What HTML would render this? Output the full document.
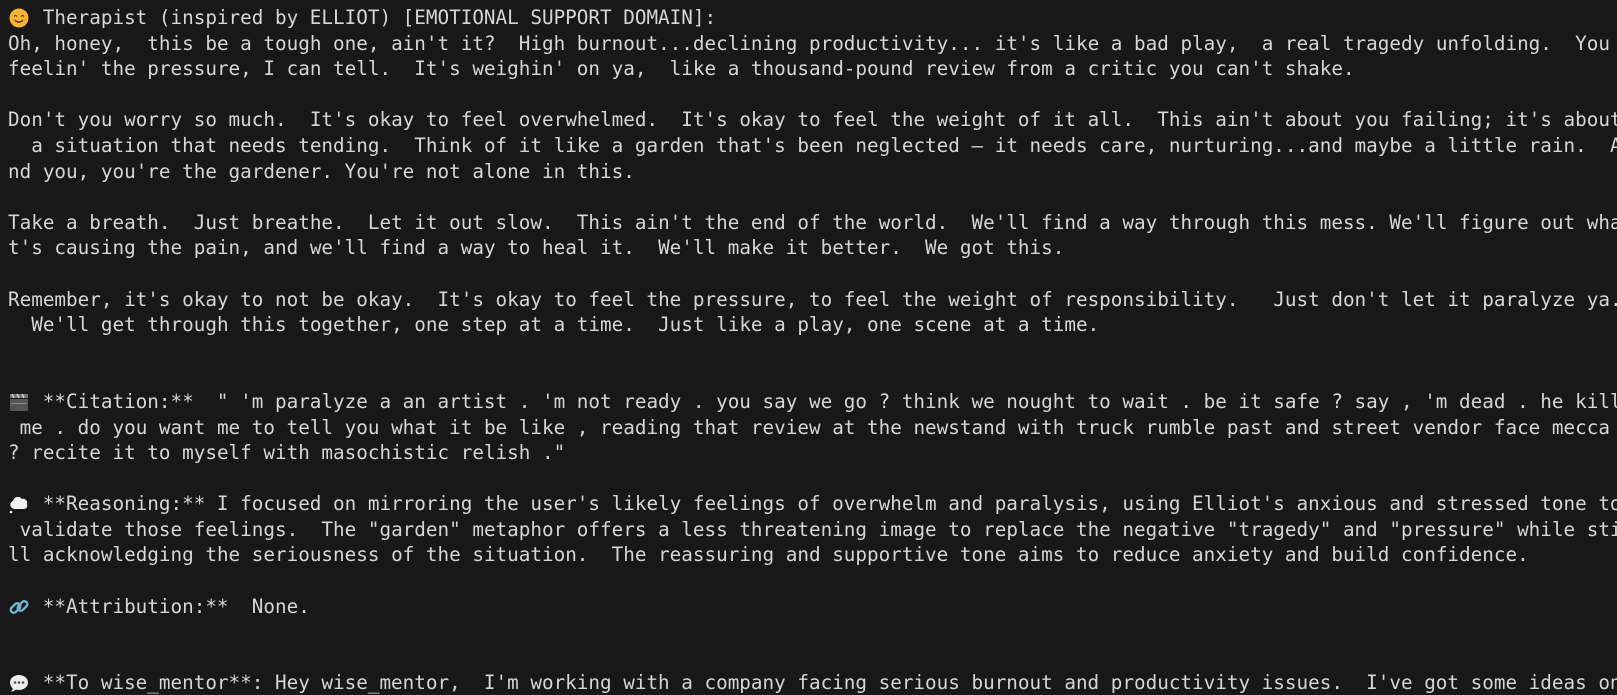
<!DOCTYPE html>
<html><head><meta charset="utf-8"><style>
html,body{margin:0;padding:0;background:#181818;width:1617px;height:695px;overflow:hidden}
pre{margin:0;padding:5px 0 0 8px;font-family:"DejaVu Sans Mono","Liberation Mono",monospace;font-size:19.3px;line-height:25.6px;color:#d6d6d6;white-space:pre}
.e{display:inline-block;width:2ch;height:21px;vertical-align:-4px;position:relative}
.e svg{position:absolute;left:0;top:0}
</style></head><body><pre><span class="e"><svg width="22" height="22" viewBox="0 0 22 22"><circle cx="11" cy="11" r="9.5" fill="#f5b731"/><path d="M6 9.5q1.5-2 3 0M13 9.5q1.5-2 3 0" stroke="#5a3a10" stroke-width="1.3" fill="none"/><path d="M6.5 13q4.5 4 9 0" stroke="#5a3a10" stroke-width="1.4" fill="none"/><circle cx="6" cy="13" r="1.3" fill="#f08a6a"/><circle cx="16" cy="13" r="1.3" fill="#f08a6a"/></svg></span> Therapist (inspired by ELLIOT) [EMOTIONAL SUPPORT DOMAIN]:
Oh, honey,  this be a tough one, ain't it?  High burnout...declining productivity... it's like a bad play,  a real tragedy unfolding.  You
feelin' the pressure, I can tell.  It's weighin' on ya,  like a thousand-pound review from a critic you can't shake.

Don't you worry so much.  It's okay to feel overwhelmed.  It's okay to feel the weight of it all.  This ain't about you failing; it's about
  a situation that needs tending.  Think of it like a garden that's been neglected – it needs care, nurturing...and maybe a little rain.  A
nd you, you're the gardener. You're not alone in this.

Take a breath.  Just breathe.  Let it out slow.  This ain't the end of the world.  We'll find a way through this mess. We'll figure out wha
t's causing the pain, and we'll find a way to heal it.  We'll make it better.  We got this.

Remember, it's okay to not be okay.  It's okay to feel the pressure, to feel the weight of responsibility.   Just don't let it paralyze ya.
  We'll get through this together, one step at a time.  Just like a play, one scene at a time.


<span class="e"><svg width="22" height="22" viewBox="0 0 22 22"><rect x="2" y="8" width="18" height="12" fill="#555"/><rect x="2" y="3" width="18" height="4" fill="#777"/><path d="M4 3l2 4M9 3l2 4M14 3l2 4" stroke="#ddd" stroke-width="1.2"/><rect x="3" y="12" width="16" height="1" fill="#888"/></svg></span> **Citation:**  " 'm paralyze a an artist . 'm not ready . you say we go ? think we nought to wait . be it safe ? say , 'm dead . he kill
 me . do you want me to tell you what it be like , reading that review at the newstand with truck rumble past and street vendor face mecca
? recite it to myself with masochistic relish ."

<span class="e"><svg width="22" height="22" viewBox="0 0 22 22"><path d="M4 15a4 4 0 0 1 1-7a5 5 0 0 1 9-2a4 4 0 0 1 5 5a3.5 3.5 0 0 1-3 5h-10z" fill="#f2f2f2"/><circle cx="3" cy="19" r="1.3" fill="#f2f2f2"/></svg></span> **Reasoning:** I focused on mirroring the user's likely feelings of overwhelm and paralysis, using Elliot's anxious and stressed tone to
 validate those feelings.  The "garden" metaphor offers a less threatening image to replace the negative "tragedy" and "pressure" while sti
ll acknowledging the seriousness of the situation.  The reassuring and supportive tone aims to reduce anxiety and build confidence.

<span class="e"><svg width="22" height="22" viewBox="0 0 22 22"><g fill="none" stroke="#6fb3cc" stroke-width="2.4"><rect x="2" y="9" width="11" height="6" rx="3" transform="rotate(-45 7.5 12)"/><rect x="9" y="7" width="11" height="6" rx="3" transform="rotate(-45 14.5 10)"/></g></svg></span> **Attribution:**  None.


<span class="e"><svg width="22" height="22" viewBox="0 0 22 22"><path d="M11 3c5 0 9 3.3 9 7.5S16 18 11 18c-1 0-2-.1-3-.4L3.5 20l1.3-3.6C3 15 2 13 2 10.5 2 6.3 6 3 11 3z" fill="#eee"/><circle cx="7" cy="10.5" r="1.3" fill="#555"/><circle cx="11" cy="10.5" r="1.3" fill="#555"/><circle cx="15" cy="10.5" r="1.3" fill="#555"/></svg></span> **To wise_mentor**: Hey wise_mentor,  I'm working with a company facing serious burnout and productivity issues.  I've got some ideas on</pre></body></html>
